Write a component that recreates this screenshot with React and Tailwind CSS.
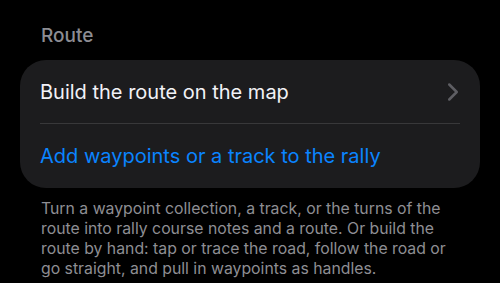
import { ChevronRight } from "lucide-react";

const RouteSection = () => {
  return (
    <div className="w-[500px] h-[283px] overflow-hidden bg-black font-['Inter',sans-serif]">
      {/* section header */}
      <div className="pl-[41px] pt-[25px] h-[60px]">
        <h2 className="text-[19px] leading-[22px] font-medium text-[#8d8d93]">Route</h2>
      </div>

      {/* grouped list */}
      <div className="mx-[20px] rounded-[26px] bg-[#1c1c1e]">
        <div className="h-[63px] flex items-center justify-between pl-[20px] pr-[12px]">
          <span className="text-[20px] text-[#f2f2f7]">Build the route on the map</span>
          <ChevronRight className="w-[30px] h-[30px] text-[#5e5e63]" strokeWidth={2} />
        </div>
        <div className="mx-[20px] h-px bg-[#38383a]" />
        <div className="h-[64px] flex items-center pl-[20px]">
          <span className="text-[20px] text-[#0a84ff]">Add waypoints or a track to the rally</span>
        </div>
      </div>

      {/* footer note */}
      <p className="pl-[41px] pr-[47px] pt-[11px] text-[15.8px] leading-[20px] text-[#8e8e93]">
        Turn a waypoint collection, a track, or the turns of the route into rally course notes and a route. Or build the route by hand: tap or trace the road, follow the road or go straight, and pull in waypoints as handles.
      </p>
    </div>
  );
};

export default function App() {
  return <RouteSection />;
}
